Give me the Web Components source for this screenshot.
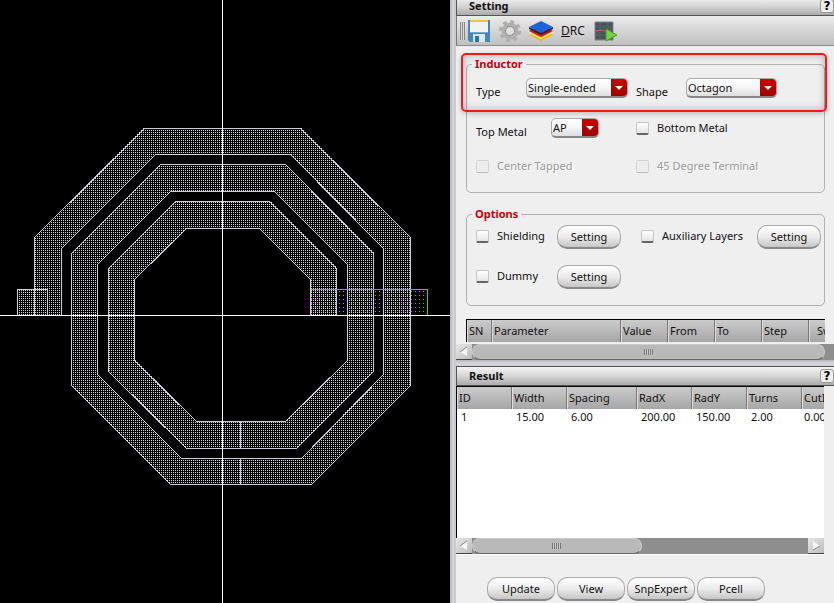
<!DOCTYPE html>
<html lang="en">
<head>
<meta charset="utf-8">
<title>Inductor Setting</title>
<style>
html,body{margin:0;height:100%;background:#efefef}
body{font:11px/16px "Noto Sans","Open Sans",sans-serif;color:#111}
</style>
</head>
<body>
<inductor-app></inductor-app>
<script>
const define=(name,html,setup)=>customElements.define(name,class extends HTMLElement{
  constructor(){
    super();
    const t=document.createElement('template');
    t.innerHTML=typeof html==='function'?html(this):html;
    this.attachShadow({mode:'open'}).append(t.content.cloneNode(true));
    if(setup)setup(this,this.shadowRoot);
  }
});
const text=s=>String(s??'').replace(/&/g,'&amp;').replace(/</g,'&lt;');

define('layout-view',`
<style>
:host{display:block;background:#000;overflow:hidden;min-width:0}
svg{display:block;width:100%;height:100%}
</style>
<svg viewBox="0 0 450 603" preserveAspectRatio="xMidYMid slice" shape-rendering="crispEdges" role="img" aria-label="Octagonal inductor layout">
<defs>
<pattern id="dots" x="1" y="0" width="2" height="2" patternUnits="userSpaceOnUse"><rect width="1" height="1" fill="#d6d6dc"/></pattern>
<pattern id="sparse" x="311" y="291" width="4" height="4" patternUnits="userSpaceOnUse"><rect width="1" height="1" fill="#19e619"/></pattern>
</defs>
<g fill="url(#dots)">
<path d="M34 315V237L144 128H301L411 237V385L312 485H170L71 386V253L160 164H285L374 253V371L296 449H186L108 371V268L175 201H270L337 268V315H310V279L259 228H186L135 279V360L196 421H285L347 360V264L274 191H170L98 264V374L181 458H301L383 374V248L290 154H155L62 248V315Z"/>
<rect x="17" y="289" width="31" height="27"/>
</g>
<rect x="310" y="289" width="118" height="27" fill="url(#sparse)"/>
<g fill="none" stroke="#ccccdd" transform="translate(.5 .5)">
<path d="M34 315V237L144 128H300L410 237V385L311 484H170L71 385V253L160 164H285L373 253V371L296 448H186L108 371V268L175 201H269L336 268V315M310 315V279L259 228H186L134 279V360L196 421H285L347 360V264L274 191H170L97 264V374L181 458H301L383 374V248L290 154H155L61 248V315M240 421V448M240 458V484"/>
<path d="M17 315V289H47V315"/>
<path d="M310 289H427V315" stroke="#19e619"/>
<path d="M222 -2V605M-2 315H452" stroke="#fff"/>
</g>
</svg>`);

define('title-bar',`
<style>
:host{display:flex;box-sizing:border-box;height:20px;align-items:center;justify-content:space-between;border:solid #555;border-width:1px 0 1px 1px;background:linear-gradient(#f4f4f4,#d6d6d6 50%,#aaa);padding-left:12px;flex:none}
h2{font-size:11px;line-height:12px;font-weight:700;margin:0}
button{font:700 12px/12px "DejaVu Sans",sans-serif;width:14px;height:14px;padding:0;border:1px solid #999;border-radius:3px;background:#eee;color:#000}
</style>
<h2><slot></slot></h2><button aria-label="Help">?</button>`);

define('tool-bar',`
<style>
:host{display:flex;box-sizing:border-box;height:30px;align-items:center;background:linear-gradient(#ebebeb,#c0c0c0);border-bottom:1px solid #8a8a8a;border-left:1px solid #777;padding-left:3px;gap:7px}
.grip{width:5px;height:18px;margin-right:-5px;background:repeating-linear-gradient(90deg,#888 0 1px,#ddd 1px 2px)}
button{width:24px;height:24px;padding:0;border:0;background:none;font:inherit;color:#111;flex:none}
.drc{width:26px;font-size:12px}
svg{display:block;width:24px;height:24px}
</style>
<span class="grip"></span>
<button aria-label="Save"><svg viewBox="0 0 24 24"><path d="M1 1H23V23H3L1 21Z" fill="#4485bb"/><path d="M3 1H21V13H3Z" fill="#f3f3ee"/><path d="M3 1H21V3H3Z" fill="#f5c53a"/><path d="M3 13H21V14H3Z" fill="#75aad0"/><path d="M6 15H18V23H6Z" fill="#d8e9f3"/><path d="M8 17H12V23H8Z" fill="#3374a7"/></svg></button>
<button aria-label="Configure"><svg viewBox="0 0 24 24"><circle cx="12" cy="12" r="9.5" fill="none" stroke="#b2aea6" stroke-width="3" stroke-dasharray="3.7 3.76"/><circle cx="12" cy="12" r="6.5" fill="#dedede" stroke="#b2b0ad" stroke-width="4"/><circle cx="12" cy="12" r="4.5" fill="#e0e0e0" stroke="#8e8e8e"/></svg></button>
<button aria-label="Layers"><svg viewBox="0 0 24 24"><path d="M0 16L12 10L24 16L12 22Z" fill="#e4bd16"/><path d="M0 13L12 19L24 13V14L12 20L0 14Z" fill="#f7eaa0"/><path d="M0 12L12 6L24 12L12 18Z" fill="#d31818"/><path d="M0 8L12 14L24 8V10L12 16L0 10Z" fill="#302030"/><path d="M0 8L12 2L24 8L12 14Z" fill="#1c65d8"/></svg></button>
<button class="drc"><u>D</u>RC</button>
<button aria-label="Run"><svg viewBox="0 0 24 24"><path d="M2 3H20V21H2Z" fill="#465458" stroke="#78888b"/><path d="M3 8H19M3 16H19M7 4V20M15 4V20" stroke="#56676b"/><path d="M3 12L8 11L12 12L18 11" fill="none" stroke="#c56660"/><path d="M13 10L24 16L13 22Z" fill="#75d23c" stroke="#4d9d25"/></svg></button>`);

define('form-group',`
<style>
:host{display:block}
fieldset{margin:0;padding:0 0 0 9px;border:1px solid #b2b2b2;border-radius:5px;min-width:0}
legend{padding:0 3px;margin-left:-4px;height:14px;font:700 11px/14px "Noto Sans","Open Sans",sans-serif;color:#c8000a}
</style>
<fieldset><legend></legend><slot></slot></fieldset>`,(h,r)=>r.querySelector('legend').textContent=h.getAttribute('label'));

define('combo-box',h=>`
<style>
:host{display:block}
label{display:flex;align-items:center;height:20px}
.name{width:var(--label,50px);padding-top:8px}
.box{display:grid;width:var(--box,102px);height:20px;box-sizing:border-box;border:1px solid #aaa;border-bottom:2px solid #888;border-radius:5px;overflow:hidden;background:linear-gradient(#fff,#f6f6f6 50%,#dedede)}
select{grid-area:1/1;appearance:none;border:0;background:none;font:inherit;color:#111;padding:0 0 0 1px;margin:0;width:100%;min-width:0}
svg{grid-area:1/1;justify-self:end;width:16px;height:100%;background:linear-gradient(#c90000,#a00000);pointer-events:none}
</style>
<label><span class="name">${text(h.getAttribute('label'))}</span><span class="box"><select><option>${text(h.getAttribute('value'))}</option></select><svg viewBox="0 0 16 17"><path d="M4 7H12L8 11Z" fill="#fff"/></svg></span></label>`);

define('check-item',h=>`
<style>
:host{display:block}
label{display:flex;align-items:center;gap:8px}
input{appearance:none;box-sizing:border-box;width:13px;height:13px;margin:0;border:1px solid #c4c4c4;border-bottom:2px solid #666;border-radius:2px;background:linear-gradient(#fff,#e4e4e4);flex:none}
:host([disabled]){color:#999;text-shadow:1px 1px #fff}
input:disabled{border-color:#d4d4d4;border-bottom:1px solid #bbb;background:#ececec}
</style>
<label><input type="checkbox" ${h.hasAttribute('disabled')?'disabled':''}><span><slot></slot></span></label>`);

define('push-button',`
<style>
:host{display:block;width:64px}
button{display:block;box-sizing:border-box;width:100%;height:24px;padding:0;border:1px solid #aaa;border-bottom:2px solid #888;border-radius:10px;background:linear-gradient(#fff,#ececec 50%,#c6c6c6);font:inherit;color:#111}
</style>
<button><slot></slot></button>`);

define('scroll-strip',h=>`
<style>
:host{display:flex;height:16px;background:#8e8e8e;flex:none}
button{width:16px;height:16px;padding:0;border:0;border-bottom:1px solid #444;background:linear-gradient(135deg,#e6e6e6,#bdbdbd);flex:none}
svg{display:block;width:16px;height:15px}
.thumb{box-sizing:border-box;flex:var(--thumb,1) 1 0;border:1px solid #ccc;border-bottom:1px solid #666;border-radius:8px;background:#b9b9b9;display:flex;align-items:center;justify-content:center}
.grip{width:9px;height:6px;background:repeating-linear-gradient(90deg,#777 0 1px,#ccc 1px 2px)}
.rest{flex:var(--rest,1) 1 0}
</style>
<button aria-label="Scroll left"><svg viewBox="0 0 16 15"><path d="M11 3L4 8L11 12Z" fill="#f6f6f6"/><path d="M11 3L4 8" stroke="#888"/></svg></button>
<div class="thumb"><span class="grip"></span></div><div class="rest"></div>
${h.hasAttribute('end')?'<button aria-label="Scroll right"><svg viewBox="0 0 16 15"><path d="M5 3L12 8L5 12Z" fill="#f6f6f6"/><path d="M5 12L12 8" stroke="#888"/></svg></button>':''}`);

define('data-grid',h=>{
  const cols=h.getAttribute('columns').split(',').map(c=>c.split(':'));
  const row=h.getAttribute('row');
  return `
<style>
:host{display:block;overflow:hidden;background:#fff;border:solid #000;border-width:1px 0 0 1px}
table{table-layout:fixed;border-collapse:separate;border-spacing:0;width:0}
th{box-sizing:border-box;height:22px;padding:0 2px;text-align:left;font-weight:400;white-space:nowrap;background:linear-gradient(#cbcbcb,#a6a6a6);border-right:1px solid #777;box-shadow:inset 1px 0 #ddd}
th:last-child,td:last-child{border:0;padding-left:var(--last,2px)}
td{padding:0 4px;white-space:nowrap}
</style>
<table><colgroup>${cols.map(c=>`<col style="width:${c[1]}px">`).join('')}</colgroup>
<thead><tr>${cols.map(c=>`<th scope="col">${text(c[0])}</th>`).join('')}</tr></thead>
<tbody>${row?`<tr>${row.split(',').map(v=>`<td>${text(v)}</td>`).join('')}</tr>`:''}</tbody></table>`;
});

define('setting-panel',`
<style>
:host{display:block;flex:none}
title-bar{margin-top:-4px}
.body{position:relative;padding:11px 9px 2px 10px}
.inductor{display:grid;grid-template-columns:160px 1fr;grid-template-rows:20px 20px 16px;row-gap:20px;padding:7px 0 18px;align-items:center}
.options{display:grid;grid-template-columns:165px 1fr;row-gap:16px;padding:4px 0 16px}
.pair{display:flex;align-items:center}
.pair check-item{width:var(--w,81px);padding-bottom:2px}
form-group+form-group{margin-top:14px}
data-grid{margin-top:13px;--last:8px}
.mark{position:absolute;left:5px;right:7px;top:7px;height:59px;box-sizing:border-box;border:2px solid #ed1c1c;border-radius:5px;box-shadow:inset 0 0 8px #0004,0 2px 5px #0003;pointer-events:none}
</style>
<title-bar>Setting</title-bar>
<tool-bar></tool-bar>
<div class="body">
<form-group label="Inductor"><div class="inductor">
<combo-box label="Type" value="Single-ended"></combo-box><combo-box label="Shape" value="Octagon" style="--box:91px"></combo-box>
<combo-box label="Top Metal" value="AP" style="--label:75px;--box:48px"></combo-box><check-item>Bottom Metal</check-item>
<check-item disabled>Center Tapped</check-item><check-item disabled>45 Degree Terminal</check-item>
</div></form-group>
<form-group label="Options"><div class="options">
<div class="pair"><check-item>Shielding</check-item><push-button>Setting</push-button></div>
<div class="pair" style="--w:116px"><check-item>Auxiliary Layers</check-item><push-button>Setting</push-button></div>
<div class="pair"><check-item>Dummy</check-item><push-button>Setting</push-button></div>
</div></form-group>
<data-grid columns="SN:25,Parameter:129,Value:47,From:47,To:47,Step:47,Sw:60"></data-grid>
<div class="mark"></div>
</div>
<scroll-strip style="--thumb:352;--rest:9"></scroll-strip>`);

define('result-panel',`
<style>
:host{display:flex;flex-direction:column;flex:1;min-height:0}
.table{display:flex;flex-direction:column;flex:1;min-height:0;margin-right:10px;border-bottom:1px solid #fff}
data-grid{flex:1}
footer{display:flex;gap:2px;padding:22px 0 2px 31px}
push-button{width:68px}
</style>
<title-bar>Result</title-bar>
<div class="table">
<data-grid columns="ID:55,Width:55,Spacing:70,RadX:55,RadY:55,Turns:55,CutI:60" row="1,15.00,6.00,200.00,150.00,2.00,0.00"></data-grid>
<scroll-strip end style="--thumb:168;--rest:167"></scroll-strip>
</div>
<footer><push-button>Update</push-button><push-button>View</push-button><push-button>SnpExpert</push-button><push-button>Pcell</push-button></footer>`);

define('inductor-app',`
<style>
:host{display:grid;grid-template-columns:minmax(0,450fr) 6px minmax(0,378fr);height:100vh;overflow:hidden}
.split{background:linear-gradient(90deg,#b4b4b8,#d4d4da 50%,#c4c4ca)}
.side{display:flex;flex-direction:column;min-width:0;min-height:0}
.bar{height:6px;flex:none;background:linear-gradient(#b8b8bc,#d4d4da 50%,#d0d0d6)}
</style>
<layout-view></layout-view><div class="split"></div>
<div class="side"><setting-panel></setting-panel><div class="bar"></div><result-panel></result-panel></div>`);
</script>
</body>
</html>
